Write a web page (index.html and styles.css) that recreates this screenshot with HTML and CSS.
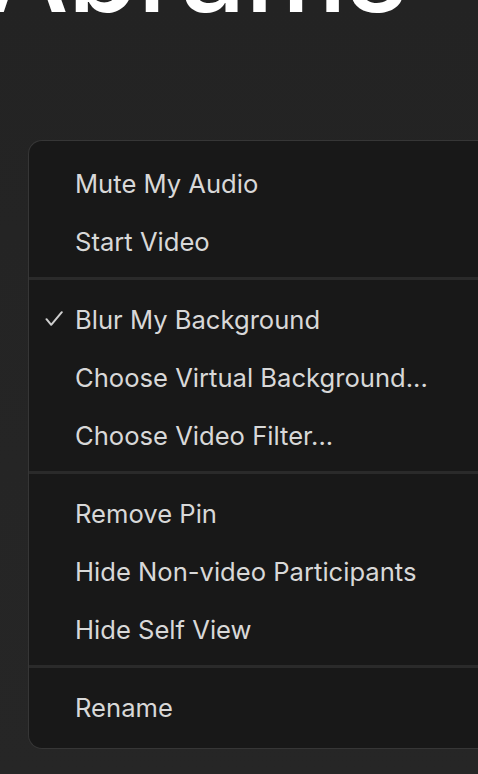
FILE: index.html
```html
<!DOCTYPE html>
<html lang="en">
<head>
<meta charset="utf-8">
<title>Menu</title>
<link rel="stylesheet" href="styles.css">
</head>
<body>
<div class="header">
  <h1 class="title">Abrams</h1>
</div>
<div class="menu">
  <div class="group">
    <div class="item">Mute My Audio</div>
    <div class="item">Start Video</div>
  </div>
  <div class="sep"></div>
  <div class="group">
    <div class="item checked">
      <svg class="check" width="18" height="16" viewBox="0 0 18 16"><path d="M1.5 8.2 L6.2 13.8 L16.8 1.2" fill="none" stroke="#cfcfcf" stroke-width="2" stroke-linecap="round" stroke-linejoin="round"/></svg>
      Blur My Background
    </div>
    <div class="item">Choose Virtual Background...</div>
    <div class="item">Choose Video Filter...</div>
  </div>
  <div class="sep"></div>
  <div class="group">
    <div class="item">Remove Pin</div>
    <div class="item">Hide Non-video Participants</div>
    <div class="item">Hide Self View</div>
  </div>
  <div class="sep"></div>
  <div class="group">
    <div class="item">Rename</div>
  </div>
</div>
</body>
</html>
```

FILE: styles.css
```css
html, body {
  margin: 0;
  padding: 0;
}
body {
  width: 478px;
  height: 774px;
  overflow: hidden;
  background: linear-gradient(180deg, #232323 0%, #252525 60%, #262626 100%);
  font-family: "Inter", "Noto Sans", sans-serif;
}
.header {
  height: 140px;
  overflow: hidden;
}
.title {
  margin: -87px 0 0 -13px;
  font-size: 115px;
  line-height: 1;
  font-weight: 500;
  color: #ffffff;
  letter-spacing: -1px;
  white-space: nowrap;
}
.menu {
  margin-left: 28px;
  width: 490px;
  box-sizing: border-box;
  height: 609px;
  background: #181818;
  border: 1px solid #363636;
  border-right: none;
  border-radius: 14px 0 0 14px;
  padding: 3px 0 4px;
}
.group {
  padding: 10.6px 0 6.4px;
}
.sep {
  height: 3px;
  background: #2a2a2a;
}
.item {
  position: relative;
  height: 58px;
  line-height: 58px;
  padding-left: 46px;
  font-size: 25.6px;
  color: #d8d8d8;
  white-space: nowrap;
}
.check {
  position: absolute;
  left: 16px;
  top: 20px;
}
```
